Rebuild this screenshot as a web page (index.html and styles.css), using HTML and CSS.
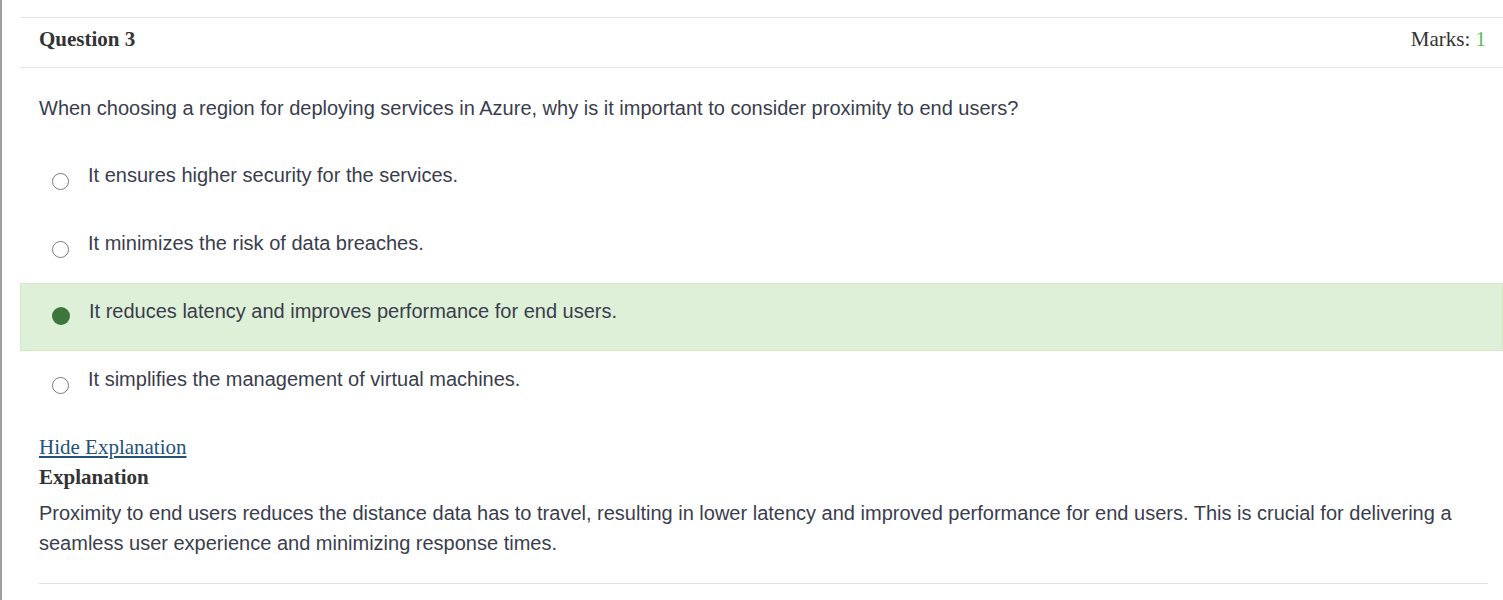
FILE: index.html
```html
<!DOCTYPE html>
<html lang="en">
<head>
<meta charset="utf-8">
<title>Question 3</title>
<link rel="stylesheet" href="styles.css">
</head>
<body>
<div class="page">
  <div class="card">
    <div class="head">
      <span class="qtitle">Question 3</span>
      <span class="marks">Marks: <span class="marks-val">1</span></span>
    </div>
    <p class="question">When choosing a region for deploying services in Azure, why is it important to consider proximity to end users?</p>
    <div class="options">
      <div class="opt">
        <span class="radio"><span class="ring"></span></span>
        <span class="opt-text">It ensures higher security for the services.</span>
      </div>
      <div class="opt">
        <span class="radio"><span class="ring"></span></span>
        <span class="opt-text">It minimizes the risk of data breaches.</span>
      </div>
      <div class="opt opt-correct">
        <span class="radio"><span class="dot"></span></span>
        <span class="opt-text">It reduces latency and improves performance for end users.</span>
      </div>
      <div class="opt">
        <span class="radio"><span class="ring"></span></span>
        <span class="opt-text">It simplifies the management of virtual machines.</span>
      </div>
    </div>
    <div class="explain">
      <a class="toggle" href="#">Hide Explanation</a>
      <div class="explain-title">Explanation</div>
      <p class="explain-text">Proximity to end users reduces the distance data has to travel, resulting in lower latency and improved performance for end users. This is crucial for delivering a seamless user experience and minimizing response times.</p>
      <div class="rule"></div>
    </div>
  </div>
</div>
</body>
</html>
```

FILE: styles.css
```css
html, body {
  margin: 0;
  padding: 0;
  background: #ffffff;
}

.page {
  border-left: 2px solid #a0a0a0;
  min-height: 600px;
  box-sizing: border-box;
  padding: 17px 0 0 18px;
}

.card {
  border-top: 1px solid #e6e6e6;
}

.head {
  display: flex;
  justify-content: space-between;
  align-items: center;
  height: 43px;
  padding: 0 17px 6px 19px;
  border-bottom: 1px solid #e6e6e6;
  font-family: "Liberation Serif", "Times New Roman", serif;
  font-size: 21px;
  color: #333333;
}

.qtitle {
  font-weight: bold;
}

.marks-val {
  color: #5cb85c;
}

.question {
  margin: 25px 0 0 19px;
  font-family: "Liberation Sans", Arial, sans-serif;
  font-size: 20px;
  line-height: 30px;
  color: #3a3d4d;
}

.options {
  margin-top: 24px;
}

.opt {
  display: flex;
  align-items: flex-start;
  height: 66px;
  border: 1px solid transparent;
  padding-left: 30px;
  font-family: "Liberation Sans", Arial, sans-serif;
  font-size: 20px;
  color: #3a3d4d;
}

.opt-correct {
  background: #dff0d8;
  border-color: #d6e9c6;
}

.radio {
  width: 18px;
  height: 18px;
  margin-top: 24px;
  margin-right: 19px;
  display: flex;
  align-items: center;
  justify-content: center;
  flex-shrink: 0;
}

.opt-correct .radio {
  margin-top: 23px;
  margin-left: 1px;
  margin-right: 19px;
}

.ring {
  width: 15px;
  height: 15px;
  border: 1px solid #7a7a7a;
  border-radius: 50%;
  background: #ffffff;
}

.dot {
  width: 18px;
  height: 18px;
  border-radius: 50%;
  background: #3c763d;
}

.opt-text {
  margin-top: 12px;
  line-height: 30px;
}

.explain {
  padding: 13px 15px 0 19px;
}

.toggle {
  display: block;
  width: max-content;
  font-family: "Liberation Serif", "Times New Roman", serif;
  font-size: 21px;
  line-height: 30px;
  color: #23527c;
  text-decoration: underline;
}

.explain-title {
  font-family: "Liberation Serif", "Times New Roman", serif;
  font-size: 21px;
  line-height: 30px;
  font-weight: bold;
  color: #333333;
}

.explain-text {
  margin: 6px 0 0 0;
  font-family: "Liberation Sans", Arial, sans-serif;
  font-size: 20px;
  line-height: 30px;
  color: #3a3d4d;
}

.rule {
  margin-top: 25px;
  border-top: 1px solid #e0e0e0;
}
```
